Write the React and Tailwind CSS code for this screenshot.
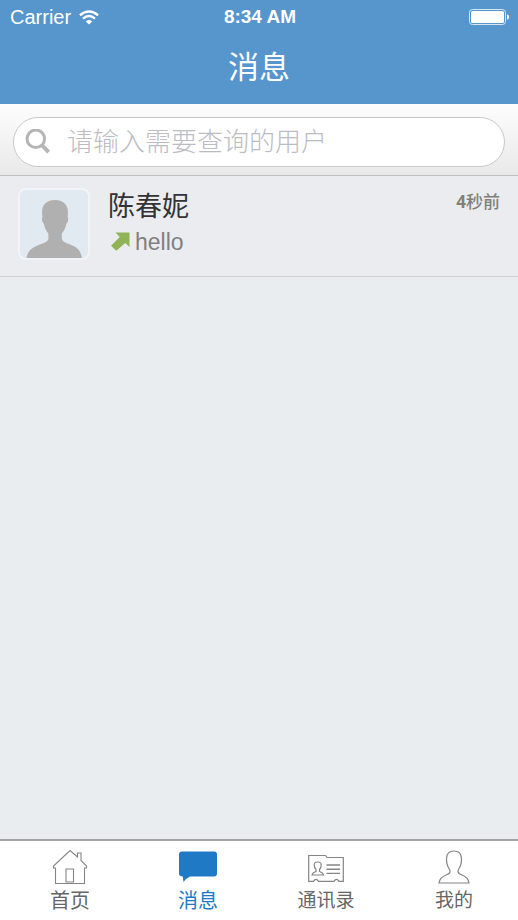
import React from "react";

function WifiIcon() {
  return (
    <svg width="20" height="15" viewBox="0 0 20 15" fill="none" stroke="#fff" strokeWidth="2.4" aria-hidden="true">
      <path d="M0.9 5.2 Q10 -2.2 19.1 5.2" />
      <path d="M4 8.6 Q10 3.6 16 8.6" />
      <path d="M10 14.6 L6.8 11.4 Q10 8.8 13.2 11.4 Z" fill="#fff" stroke="none" />
    </svg>
  );
}

function BatteryIcon() {
  return (
    <svg width="41" height="17" viewBox="0 0 41 17" aria-hidden="true">
      <rect x="0.5" y="0.5" width="36" height="15" rx="3" fill="none" stroke="#d6e6f4" />
      <rect x="2" y="2" width="33" height="12" rx="1.5" fill="#fff" />
      <path d="M38 5.2 Q40.2 6 40.2 8 Q40.2 10 38 10.8 Z" fill="#fff" />
    </svg>
  );
}

function SearchIcon() {
  return (
    <svg className="shrink-0" width="26" height="26" viewBox="0 0 26 26" fill="none" stroke="#b5b5b5" aria-hidden="true">
      <circle cx="10.8" cy="9.8" r="8.8" strokeWidth="3" />
      <path d="M16.8 16 L23.6 23.2" strokeWidth="4" />
    </svg>
  );
}

function Avatar() {
  return (
    <svg className="block" width="68" height="68" viewBox="0 0 68 68" aria-hidden="true">
      <path
        d="M6.500 68 C8 60 13 57 20 54.500 C25 52.500 28.500 51.500 28.500 48 L28.300 43.500 C26 40.500 24.500 37.500 23.800 33.500 C22 32.500 21.500 28.500 22.500 27 C20.800 17 24 10.500 35 10 C46 10.500 49.200 17 47.600 27 C48.800 28.500 48.200 32.500 46.400 33.500 C45.700 37.500 44.200 40.500 41.800 43.500 L41.800 48 C42 51.500 45 52.500 50 54.500 C57 57 60.500 60 62 68 Z"
        fill="#b0b0b0"
      />
    </svg>
  );
}

function ArrowIcon() {
  return (
    <svg width="20" height="20" viewBox="0 0 20 20" aria-hidden="true">
      <path d="M5.500 0.500 H19.500 V15 L15.300 11 L6.300 18.800 L1 13.800 L9.800 5.100 Z" fill="#8fb356" />
    </svg>
  );
}

function HomeIcon() {
  return (
    <svg width="36" height="36" viewBox="0 0 36 36" fill="none" stroke="#858585" strokeWidth="1.1" aria-hidden="true">
      <path d="M3.500 19 V34.500 H32.500 V19 H34.500 V17 L29 11.500 V4 H25.500 V8 L18 1.500 L1.500 17 V19 Z" />
      <path d="M14 33 V20 H21.500 V33 Z" />
    </svg>
  );
}

function MessageIcon() {
  return (
    <svg width="38" height="36" viewBox="0 0 38 36" aria-hidden="true">
      <path d="M3 2.500 H35 Q38 2.500 38 5.500 V24.500 Q38 27.500 35 27.500 H11 Q7.500 29 4.500 33 L3.800 27.500 Q0 27.500 0 24.500 V5.500 Q0 2.500 3 2.500 Z" fill="#2079c4" />
    </svg>
  );
}

function ContactsIcon() {
  return (
    <svg width="36" height="36" viewBox="0 0 36 36" fill="none" stroke="#858585" strokeWidth="1.2" aria-hidden="true">
      <path d="M0.700 6.500 H17.500 L19 8.500 H35.300 V32.300 H31 Q28.500 28.500 26 32.300 H10.500 Q8 28.500 5.500 32.300 H0.700 Z" />
      <path d="M4 26 Q4.500 23.500 8 22.500 V20.500 Q6.200 18.500 6.200 16 Q6.200 13 9.700 13 Q13.200 13 13.200 16 Q13.200 18.500 11.500 20.500 V22.500 Q15 23.500 15.500 26 Z" />
      <path d="M18.500 16 H32 M18.500 20.200 H32 M18.500 24.400 H32" strokeWidth="1.400" />
    </svg>
  );
}

function ProfileIcon() {
  return (
    <svg width="32" height="36" viewBox="0 0 32 36" fill="none" stroke="#858585" strokeWidth="1.2" aria-hidden="true">
      <path d="M1 34 C1.500 29 5 27 9 25.500 C12 24.500 12.800 22.500 11.500 20.500 C9.500 17.500 8.300 14 8.500 9.500 C8.700 4 11.500 2 16 2 C20.500 2 23.300 4 23.500 9.500 C23.700 14 22.500 17.500 20.500 20.500 C19.200 22.500 20 24.500 23 25.500 C27 27 30.500 29 31 34 Z" />
    </svg>
  );
}

const tabs = [
  { label: "首页", Icon: HomeIcon, style: "text-[20px] text-[#666]" },
  { label: "消息", Icon: MessageIcon, style: "text-[20px] text-[#2079c4]", active: true },
  { label: "通讯录", Icon: ContactsIcon, style: "text-[19px] text-[#666]" },
  { label: "我的", Icon: ProfileIcon, style: "text-[19px] text-[#666]" },
];

export default function App() {
  return (
    <div className="flex min-h-screen flex-col bg-[#e9edf0] font-['Liberation_Sans','Noto_Sans_CJK_SC',sans-serif]">
      <header className="bg-[#5795cd] text-white">
        <div className="grid h-[34px] grid-cols-3 items-center pr-2 pl-2.5">
          <div className="flex items-center gap-2 text-[20px]">
            <span>Carrier</span>
            <WifiIcon />
          </div>
          <span className="text-center text-[19px] font-bold">8:34 AM</span>
          <span className="justify-self-end">
            <BatteryIcon />
          </span>
        </div>
        <h1 className="h-[70px] text-center text-[31px] leading-[68px]">消息</h1>
      </header>

      <form className="border-b border-[#bdbdbd] bg-linear-to-b from-[#fdfdfd] to-[#e9e9e9] px-[13px] pt-[13px] pb-2" onSubmit={(e) => e.preventDefault()}>
        <label className="flex h-[50px] items-center gap-4 rounded-full border border-[#c8c8c8] bg-white pr-5 pl-[11px]">
          <SearchIcon />
          <input
            type="text"
            aria-label="请输入需要查询的用户"
            placeholder="请输入需要查询的用户"
            className="h-12 min-w-0 flex-1 bg-transparent text-[26px] font-light text-[#444] outline-none placeholder:text-[#bcbcc4]"
          />
        </label>
      </form>

      <main className="flex-1">
        <ul>
          <li className="flex items-start gap-[18px] border-b border-[#d0d0d0] bg-[#ebecf0] px-[18px] pt-3 pb-4">
            <div className="shrink-0 overflow-hidden rounded-lg border-2 border-[#f1f5f8] bg-[#e1eaf1]">
              <Avatar />
            </div>
            <div className="min-w-0 flex-1">
              <h2 className="text-[27px] leading-[38px] text-[#333]">陈春妮</h2>
              <p className="flex items-center gap-[5px] pl-[2px] text-[23px] leading-8 text-[#808080]">
                <ArrowIcon />
                <span>hello</span>
              </p>
            </div>
            <time className="text-[17px] leading-7 text-[#808078]">
              <b className="font-['Open_Sans',sans-serif]">4</b>
              <span className="font-medium">秒前</span>
            </time>
          </li>
        </ul>
      </main>

      <nav className="grid h-[81px] grid-cols-4 border-t-2 border-[#a5a5a5] bg-white pl-1.5">
        {tabs.map(({ label, Icon, style, active }) => (
          <button key={label} type="button" aria-current={active ? "page" : undefined} className="flex flex-col items-center pt-2">
            <Icon />
            <span className={`leading-8 ${style}`}>{label}</span>
          </button>
        ))}
      </nav>
    </div>
  );
}
